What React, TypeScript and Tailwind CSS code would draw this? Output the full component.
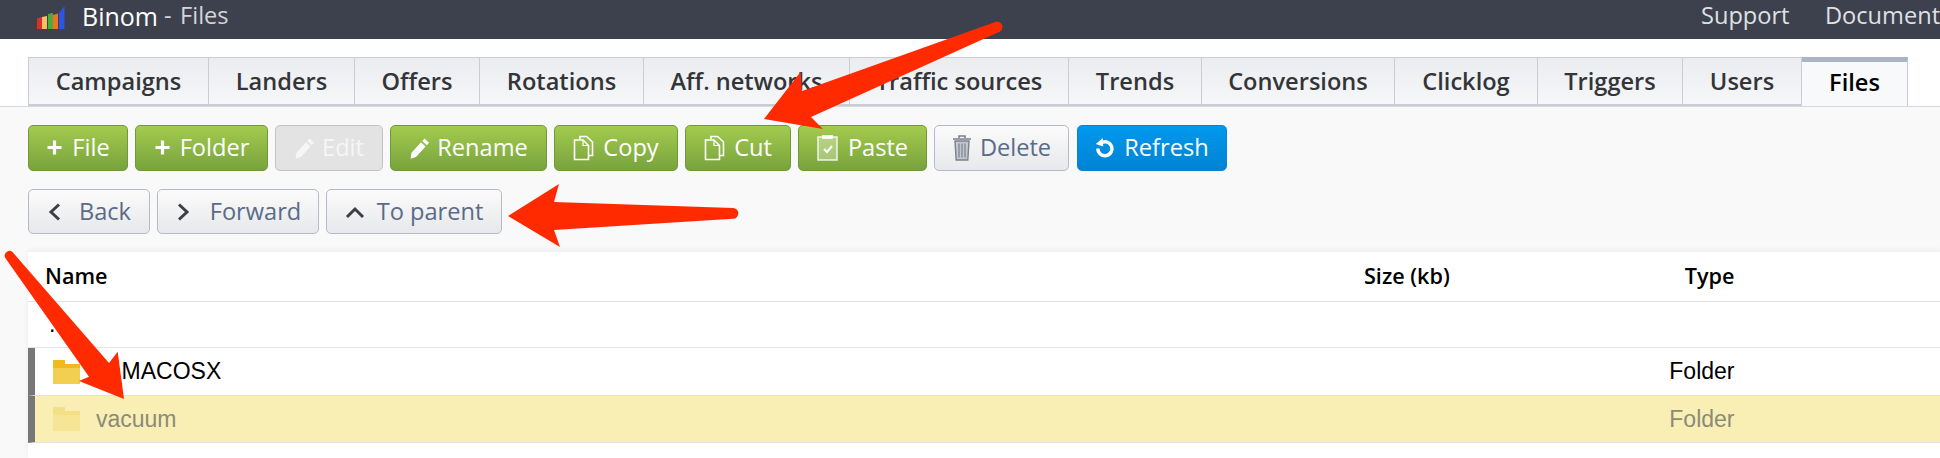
import React from "react";

const ff = "font-['Open_Sans',sans-serif]";
const arial = "font-['Liberation_Sans',Arial,sans-serif]";

const tabs: [string, string][] = [
  ["Campaigns", "w-[180px]"],
  ["Landers", "w-[146px]"],
  ["Offers", "w-[125px]"],
  ["Rotations", "w-[164px]"],
  ["Aff. networks", "w-[206px]"],
  ["Traffic sources", "w-[219px]"],
  ["Trends", "w-[133px]"],
  ["Conversions", "w-[193px]"],
  ["Clicklog", "w-[143px]"],
  ["Triggers", "w-[145px]"],
  ["Users", "w-[119px]"],
];

const Plus = () => (
  <svg width="17" height="17" viewBox="0 0 17 17" className="shrink-0">
    <path d="M8.5 1.5v14M1.5 8.5h14" stroke="currentColor" strokeWidth="3.2" />
  </svg>
);
const Pencil = () => (
  <svg width="22" height="24" viewBox="0 0 22 24" className="shrink-0">
    <path d="M15.5 2.5l4.5 4.2-2.2 2.5-4.6-4.2zM12 6.2l4.6 4.2-9.600 10.600-5.500 1.800 1-6z" fill="currentColor" />
  </svg>
);
const CopyIcon = () => (
  <svg width="21" height="26" viewBox="0 0 21 26" fill="none" stroke="currentColor" strokeWidth="1.6" className="shrink-0">
    <path d="M7 4V1.5h6.5L19.5 7v13.5H16" />
    <path d="M1.5 5h8.5l5.5 5.5v14h-14z" />
    <path d="M10 5v5.500h5.500" strokeWidth="1.2" />
  </svg>
);
const PasteIcon = () => (
  <svg width="21" height="27" viewBox="0 0 21 27" className="shrink-0">
    <rect x="1" y="3" width="19" height="23" fill="#fff" fillOpacity="0.3" stroke="#fff" strokeOpacity="0.85" strokeWidth="1.5" />
    <rect x="5" y="1" width="11" height="4" fill="#fff" fillOpacity="0.85" />
    <path d="M7 15l3 3 5-6" fill="none" stroke="#fff" strokeWidth="2" />
  </svg>
);
const Trash = () => (
  <svg width="20" height="26" viewBox="0 0 20 26" className="shrink-0">
    <path d="M7 3V1h6v2M1 4h18" fill="none" stroke="#79808e" strokeWidth="1.6" />
    <path d="M3 6h14l-1.200 19H4.200z" fill="#c4c7cd" stroke="#79808e" strokeWidth="1.4" />
    <path d="M7 8.500v14M10 8.500v14M13 8.500v14" stroke="#79808e" strokeWidth="1.2" />
  </svg>
);
const RefreshIcon = () => (
  <svg width="19" height="22" viewBox="0 0 19 22" className="shrink-0">
    <path d="M5.500 6.300a7 7 0 1 1-2.600 5.200" fill="none" stroke="#fff" strokeWidth="3.4" />
    <path d="M7.800 1l.4 8.600L0.800 7z" fill="#fff" />
  </svg>
);
const Chevron = ({ d }: { d: string }) => (
  <svg width="16" height="20" viewBox="0 0 16 20" fill="none" stroke="#3d3f44" strokeWidth="3" className="shrink-0">
    <path d={d} />
  </svg>
);

const green = "border-[#6f9a37] bg-gradient-to-b from-[#a3cb4e] to-[#78a33d] text-white";
const plain = "border-[#b5bbc6] bg-gradient-to-b from-[#fbfbfb] to-[#e7e8eb] text-[#5a6b88]";
const nav = `${plain} pt-[2px]`;

function Btn({ w, cls, gap, children }: { w: string; cls: string; gap: string; children: React.ReactNode }) {
  return (
    <button className={`flex h-full items-center justify-center rounded-[5px] border pb-[1px] text-[23.6px] leading-none ${ff} ${w} ${cls} ${gap}`}>
      {children}
    </button>
  );
}

const Folder = ({ faded }: { faded?: boolean }) => (
  <svg width="27" height="24" viewBox="0 0 27 24" className={`shrink-0 ${faded ? "opacity-30" : ""}`}>
    <path d="M0 0h12v4h15v5H0z" fill="#efbb1c" />
    <path d="M0 8h27v16H0z" fill="#f2cf50" />
  </svg>
);

export default function App() {
  return (
    <div className="relative h-[458px] w-[1940px] overflow-hidden bg-[#f9f9f9]">
      <header className={`flex h-[39px] items-center overflow-hidden bg-[#3d414d] pb-[7px] text-[23.6px] leading-none ${ff}`}>
        <div className="ml-[37px] flex w-[45px] shrink-0 pt-[3px]">
          <svg width="28" height="24" viewBox="0 0 28 24">
            <path d="M0 12.500L5 11v12H0z" fill="#dc2f2b" />
            <path d="M5 11l5-1v13H5z" fill="#f7c067" />
            <path d="M11 8l5-1v16h-5z" fill="#4aad3a" />
            <path d="M16 9l5-1.500V23h-5z" fill="#ee7420" />
            <path d="M22 7l5.500-7v23H22z" fill="#2f54e0" />
          </svg>
        </div>
        <span className="w-[82px] shrink-0 text-[25px] text-white">Binom</span>
        <span className="w-[16px] shrink-0 text-[#d3d5da]">-</span>
        <span className="w-[1521px] shrink-0 text-[#d3d5da]">Files</span>
        <span className="w-[124px] shrink-0 text-[#dfe0e3]">Support</span>
        <span className="shrink-0 text-[#dfe0e3]">Document</span>
      </header>

      <div className="h-[18px] bg-white" />
      <div className="flex h-[50px] border-b border-[#d5d8dd] bg-white pl-[28px]">
        <div className={`flex border-l border-t border-[#c9cdd5] text-[23.6px] font-semibold text-[#333538] ${ff}`}>
          {tabs.map(([t, w]) => (
            <div
              key={t}
              className={`flex items-center justify-center border-b-2 border-r border-[#c9cdd5] bg-gradient-to-b from-[#ebecef] to-[#f6f7f9] pt-[1px] ${w}`}
            >
              {t}
            </div>
          ))}
          <div className="-mt-px flex w-[106px] items-center justify-center border-r border-t-[5px] border-[#aab5c3] border-r-[#c9cdd5] bg-[#f8f9fa] pb-[3px] text-black">
            Files
          </div>
        </div>
      </div>

      <div className="mt-[18px] flex h-[46px] gap-[7px] pl-[28px]">
        <Btn w="w-[100px]" cls={green} gap="gap-[9px]"><Plus />File</Btn>
        <Btn w="w-[133px]" cls={green} gap="gap-[9px]"><Plus />Folder</Btn>
        <Btn w="w-[108px]" cls="border-[#c4c4c4] bg-[#e3e3e3] text-[#f6f6f6]" gap="gap-[6px]"><Pencil />Edit</Btn>
        <Btn w="w-[157px]" cls={green} gap="gap-[6px]"><Pencil />Rename</Btn>
        <Btn w="w-[124px]" cls={green} gap="gap-[9px]"><CopyIcon />Copy</Btn>
        <Btn w="w-[106px]" cls={green} gap="gap-[9px]"><CopyIcon />Cut</Btn>
        <Btn w="w-[129px]" cls={green} gap="gap-[10px]"><PasteIcon />Paste</Btn>
        <Btn w="w-[135px]" cls={plain} gap="gap-[8px]"><Trash />Delete</Btn>
        <Btn w="w-[150px]" cls="ml-px border-[#0a84d0] bg-gradient-to-b from-[#0099ee] to-[#0083d3] text-white" gap="gap-[10px]"><RefreshIcon />Refresh</Btn>
      </div>

      <div className="mt-[18px] flex h-[45px] gap-[7px] pl-[28px]">
        <Btn w="w-[122px]" cls={nav} gap="gap-[16px]"><Chevron d="M12 2.500L4 10l8 7.500" />Back</Btn>
        <Btn w="w-[162px]" cls={nav} gap="gap-[19px]"><Chevron d="M4 2.500L12 10l-8 7.500" />Forward</Btn>
        <Btn w="w-[176px]" cls={nav} gap="gap-[12px]">
          <svg width="20" height="14" viewBox="0 0 20 14" fill="none" stroke="#3d3f44" strokeWidth="3" className="shrink-0"><path d="M2 12l8-8 8 8" /></svg>
          To parent
        </Btn>
      </div>

      <section className="ml-[28px] mt-[18px] h-[207px] bg-white shadow-[0_-2px_6px_rgba(0,0,0,0.05)]">
        <div className={`grid h-[50px] grid-cols-[1319px_370.5px] items-center border-b border-[#e2e2e2] pl-[17px] text-[21.6px] font-semibold text-black ${ff}`}>
          <span>Name</span>
          <span className="flex justify-between">
            <span>Size (kb)</span>
            <span>Type</span>
          </span>
        </div>
        <div className={`flex h-[46px] items-center border-b border-[#e2e2e2] pl-[21px] text-[23px] text-black ${arial}`}>
          <span>..</span>
        </div>
        <div className={`grid h-[48px] grid-cols-[1312px_369.5px] items-center border-b border-l-[7px] border-[#e2e2e2] border-l-[#777777] pl-[18px] text-[23px] text-black ${arial}`}>
          <span className="flex items-center gap-[16px]"><Folder />__MACOSX</span>
          <span className="text-right">Folder</span>
        </div>
        <div className={`grid h-[47px] grid-cols-[1312px_369.5px] items-center border-b border-l-[7px] border-[#e2e2e2] border-l-[#777777] bg-[#f9efb4] pl-[18px] text-[23px] text-[#8c8a78] ${arial}`}>
          <span className="flex items-center gap-[16px]"><Folder faded />vacuum</span>
          <span className="text-right">Folder</span>
        </div>
      </section>

      <svg width="1940" height="458" viewBox="0 0 1940 458" className="pointer-events-none absolute left-0 top-0">
        <g fill="#ff2a00">
          <path d="M764 119L800.700 71.700 802 91 994 22.500A5.200 5.200 0 0 1 1000 31.500L811 117 823 129z" />
          <path d="M508 216L559 184 554 202 733 208A5.300 5.300 0 0 1 733 218.700L554 230 560 247z" />
          <path d="M124 399L117.700 351.700 109 363 12.500 252A4.800 4.800 0 0 0 6 259L89 376.700 79 381z" />
        </g>
      </svg>
    </div>
  );
}
